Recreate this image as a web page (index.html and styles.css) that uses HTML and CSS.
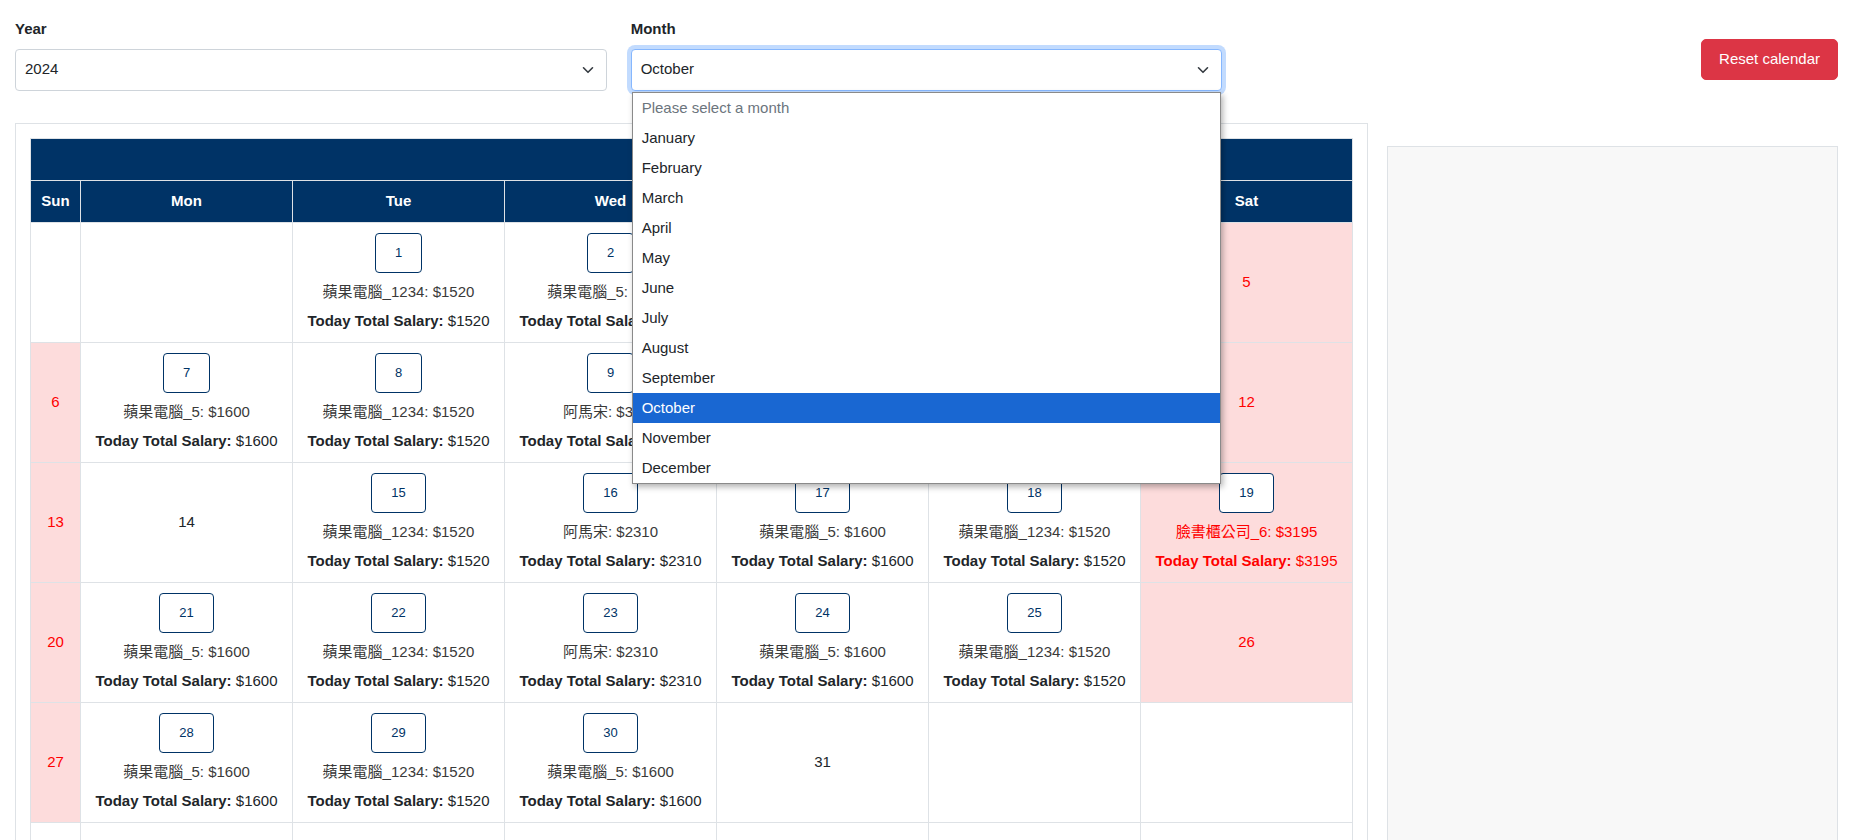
FILE: index.html
```html
<!DOCTYPE html>
<html lang="zh-Hant">
<head>
<meta charset="utf-8">
<title>Salary Calendar</title>
<link rel="stylesheet" href="styles.css">
</head>
<body>
<div class="page">
  <div class="filters">
    <div class="field">
      <div class="label">Year</div>
      <div class="select">
        <span>2024</span>
        <svg class="chev" viewBox="0 0 12 8" aria-hidden="true"><path d="M1.5 1.8 L6 6.3 L10.5 1.8" fill="none" stroke="#343a40" stroke-width="1.6" stroke-linecap="round" stroke-linejoin="round"/></svg>
      </div>
    </div>
    <div class="field">
      <div class="label">Month</div>
      <div class="select-wrap">
        <div class="select focus">
          <span>October</span>
          <svg class="chev" viewBox="0 0 12 8" aria-hidden="true"><path d="M1.5 1.8 L6 6.3 L10.5 1.8" fill="none" stroke="#343a40" stroke-width="1.6" stroke-linecap="round" stroke-linejoin="round"/></svg>
        </div>
        <ul class="menu">
          <li class="ph">Please select a month</li>
          <li>January</li>
          <li>February</li>
          <li>March</li>
          <li>April</li>
          <li>May</li>
          <li>June</li>
          <li>July</li>
          <li>August</li>
          <li>September</li>
          <li class="sel">October</li>
          <li>November</li>
          <li>December</li>
        </ul>
      </div>
    </div>
    <div class="actions">
      <button class="btn-reset" type="button">Reset calendar</button>
    </div>
  </div>

  <div class="main">
    <div class="cal-box">
      <table class="cal">
        <colgroup>
          <col class="c-sun"><col><col><col><col><col><col>
        </colgroup>
        <thead>
          <tr class="title"><th colspan="7"></th></tr>
          <tr class="days"><th>Sun</th><th>Mon</th><th>Tue</th><th>Wed</th><th>Thu</th><th>Fri</th><th>Sat</th></tr>
        </thead>
        <tbody>
          <tr class="week">
            <td></td>
            <td></td>
            <td><span class="day-btn">1</span><div class="entry">蘋果電腦_1234: $1520</div><div class="total"><b>Today Total Salary:</b> $1520</div></td>
            <td><span class="day-btn">2</span><div class="entry">蘋果電腦_5: $1600</div><div class="total"><b>Today Total Salary:</b> $1600</div></td>
            <td><span class="day-btn">3</span><div class="entry">蘋果電腦_5: $1600</div><div class="total"><b>Today Total Salary:</b> $1600</div></td>
            <td><span class="day-btn">4</span><div class="entry">蘋果電腦_1234: $1520</div><div class="total"><b>Today Total Salary:</b> $1520</div></td>
            <td class="we red">5</td>
          </tr>
          <tr class="week">
            <td class="we red">6</td>
            <td><span class="day-btn">7</span><div class="entry">蘋果電腦_5: $1600</div><div class="total"><b>Today Total Salary:</b> $1600</div></td>
            <td><span class="day-btn">8</span><div class="entry">蘋果電腦_1234: $1520</div><div class="total"><b>Today Total Salary:</b> $1520</div></td>
            <td><span class="day-btn">9</span><div class="entry">阿馬宋: $3080</div><div class="total"><b>Today Total Salary:</b> $3080</div></td>
            <td><span class="day-btn">10</span><div class="entry">蘋果電腦_5: $1600</div><div class="total"><b>Today Total Salary:</b> $1600</div></td>
            <td><span class="day-btn">11</span><div class="entry">蘋果電腦_1234: $1520</div><div class="total"><b>Today Total Salary:</b> $1520</div></td>
            <td class="we red">12</td>
          </tr>
          <tr class="week">
            <td class="we red">13</td>
            <td>14</td>
            <td><span class="day-btn">15</span><div class="entry">蘋果電腦_1234: $1520</div><div class="total"><b>Today Total Salary:</b> $1520</div></td>
            <td><span class="day-btn">16</span><div class="entry">阿馬宋: $2310</div><div class="total"><b>Today Total Salary:</b> $2310</div></td>
            <td><span class="day-btn">17</span><div class="entry">蘋果電腦_5: $1600</div><div class="total"><b>Today Total Salary:</b> $1600</div></td>
            <td><span class="day-btn">18</span><div class="entry">蘋果電腦_1234: $1520</div><div class="total"><b>Today Total Salary:</b> $1520</div></td>
            <td class="we red"><span class="day-btn">19</span><div class="entry">臉書櫃公司_6: $3195</div><div class="total"><b>Today Total Salary:</b> $3195</div></td>
          </tr>
          <tr class="week">
            <td class="we red">20</td>
            <td><span class="day-btn">21</span><div class="entry">蘋果電腦_5: $1600</div><div class="total"><b>Today Total Salary:</b> $1600</div></td>
            <td><span class="day-btn">22</span><div class="entry">蘋果電腦_1234: $1520</div><div class="total"><b>Today Total Salary:</b> $1520</div></td>
            <td><span class="day-btn">23</span><div class="entry">阿馬宋: $2310</div><div class="total"><b>Today Total Salary:</b> $2310</div></td>
            <td><span class="day-btn">24</span><div class="entry">蘋果電腦_5: $1600</div><div class="total"><b>Today Total Salary:</b> $1600</div></td>
            <td><span class="day-btn">25</span><div class="entry">蘋果電腦_1234: $1520</div><div class="total"><b>Today Total Salary:</b> $1520</div></td>
            <td class="we red">26</td>
          </tr>
          <tr class="week">
            <td class="we red">27</td>
            <td><span class="day-btn">28</span><div class="entry">蘋果電腦_5: $1600</div><div class="total"><b>Today Total Salary:</b> $1600</div></td>
            <td><span class="day-btn">29</span><div class="entry">蘋果電腦_1234: $1520</div><div class="total"><b>Today Total Salary:</b> $1520</div></td>
            <td><span class="day-btn">30</span><div class="entry">蘋果電腦_5: $1600</div><div class="total"><b>Today Total Salary:</b> $1600</div></td>
            <td>31</td>
            <td></td>
            <td></td>
          </tr>
          <tr class="week">
            <td></td><td></td><td></td><td></td><td></td><td></td><td></td>
          </tr>
        </tbody>
      </table>
    </div>
    <div class="side"></div>
  </div>
</div>
</body>
</html>
```

FILE: styles.css
```css
* { box-sizing: border-box; }
html, body { margin: 0; padding: 0; }
body {
  font-family: "Liberation Sans", Arial, "Noto Sans CJK TC", sans-serif;
  font-size: 15px;
  line-height: 1.5;
  color: #212529;
  background: #fff;
}
.page { padding: 18px 17px 0 15px; }

.filters {
  display: grid;
  grid-template-columns: 1fr 1fr 1fr;
  column-gap: 24px;
}
.label {
  font-weight: 700;
  line-height: 22.5px;
  margin-bottom: 8px;
}
.select {
  height: 42px;
  border: 1px solid #ced4da;
  border-radius: 4px;
  padding: 0 9px;
  display: flex;
  align-items: center;
  justify-content: space-between;
  background: #fff;
  color: #212529;
}
.select.focus {
  border-color: #86b7fe;
  box-shadow: 0 0 0 4px rgba(13, 110, 253, 0.25);
}
.chev { width: 12px; height: 8px; margin-right: 3px; flex: none; }

.select-wrap { position: relative; }
.menu {
  position: absolute;
  left: 1px;
  right: 1px;
  top: 43px;
  margin: 0;
  padding: 0;
  list-style: none;
  background: #fff;
  border: 1px solid #8a8a8a;
  box-shadow: 2px 3px 6px rgba(0, 0, 0, 0.3);
  z-index: 10;
}
.menu li {
  height: 30px;
  line-height: 30px;
  padding-left: 9px;
  color: #212529;
}
.menu li.ph { color: #6c757d; }
.menu li.sel { background: #1967d2; color: #fff; }

.actions {
  display: flex;
  justify-content: flex-end;
  align-items: flex-start;
  padding-top: 21px;
}
.btn-reset {
  font: inherit;
  line-height: 22.5px;
  color: #fff;
  background: #dc3545;
  border: 1px solid #dc3545;
  border-radius: 5px;
  padding: 8px 17px;
}

.main {
  display: flex;
  align-items: flex-start;
  gap: 19px;
  margin-top: 32px;
}
.cal-box {
  width: 1353px;
  flex: none;
  border: 1px solid #dee2e6;
  padding: 14px;
}
.side {
  flex: 1;
  margin-top: 23px;
  height: 760px;
  background: #f8f8f8;
  border: 1px solid #dee2e6;
}

.cal {
  width: 100%;
  border-collapse: collapse;
  table-layout: fixed;
}
.c-sun { width: 50px; }
.cal th, .cal td {
  border: 1px solid #dee2e6;
  text-align: center;
  vertical-align: middle;
}
.cal thead th {
  background: #003366;
  color: #fff;
  font-weight: 700;
  padding: 0;
}
.cal thead tr { height: 42px; }
.cal tr.week { height: 120px; }
.cal tr.week td { padding: 10px 2px 9px; }

.day-btn {
  display: block;
  width: fit-content;
  margin: 0 auto;
  height: 40px;
  line-height: 38px;
  padding: 0 19px;
  border: 1px solid #003366;
  border-radius: 4px;
  color: #003366;
  font-size: 13px;
  background: #fff;
}
.entry {
  margin-top: 7px;
  line-height: 23px;
  color: #3a3a3a;
  white-space: nowrap;
}
.total {
  margin-top: 6px;
  line-height: 23px;
  color: #212529;
  white-space: nowrap;
}
.total b { font-weight: 700; }

.we { background: #fddcdc; }
.red, .red .entry, .red .total { color: #ff0000; }
```
